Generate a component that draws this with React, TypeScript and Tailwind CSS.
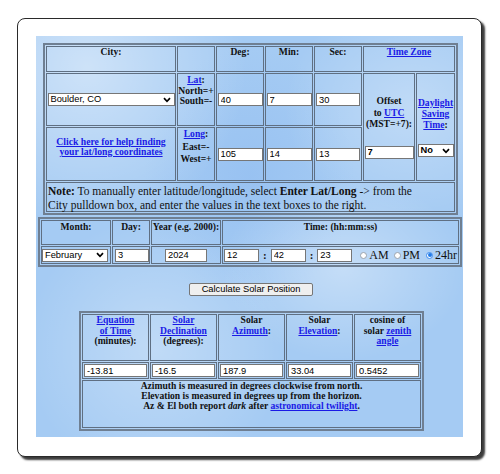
import React from "react";

const serif = "font-['Liberation_Serif','Times_New_Roman',serif]";
const sans = "font-['Liberation_Sans',Arial,sans-serif]";
const cell = "border border-[#5f6f82]";
const head = "text-center text-[9.6px] font-bold leading-[9px]";
const link = "text-[#1a1ae6] underline";

function TextBox({ value, className = "" }: { value: string; className?: string }) {
  return (
    <input
      readOnly
      defaultValue={value}
      className={`h-[13px] border border-[#767676] bg-white px-[2px] text-[9.3px] leading-[11px] text-black outline-none ${sans} ${className}`}
    />
  );
}

function Select({ value, className = "" }: { value: string; className?: string }) {
  return (
    <div
      className={`flex h-[13px] items-center justify-between border border-[#767676] bg-white pl-[2px] pr-[3px] text-[9.3px] leading-[11px] text-black ${sans} ${className}`}
    >
      <span>{value}</span>
      <svg width="8" height="6" viewBox="0 0 8 6">
        <path d="M1 1.2 4 4.3 7 1.2" fill="none" stroke="#000" strokeWidth="1.7" />
      </svg>
    </div>
  );
}

function Radio({ label, checked = false, className = "" }: { label: string; checked?: boolean; className?: string }) {
  return (
    <label className={`flex items-center ${className}`}>
      {checked ? (
        <span className="flex h-[7px] w-[7px] items-center justify-center rounded-full border border-[#3b8cf0] bg-white">
          <span className="h-[4px] w-[4px] rounded-full bg-[#1f7ae8]" />
        </span>
      ) : (
        <span className="h-[7px] w-[7px] rounded-full border border-[#9aa3ad] bg-white" />
      )}
      <span className="ml-[2px] text-[12px] leading-[12px]">{label}</span>
    </label>
  );
}

export default function App() {
  return (
    <div className={`min-h-screen bg-white pl-[17px] pt-[18px] text-[#111] ${serif}`}>
      <div className="w-[465px] rounded-[8px] border border-[#2a2a2a] bg-white pb-[19px] pl-[18px] pr-[18px] pt-[17px] shadow-[3px_3px_2px_#3c3c3c]">
        <div className="flex h-[401px] w-[427px] flex-col items-start bg-[#a5cbf3] bg-[radial-gradient(ellipse_at_12%_8%,rgba(255,255,255,0.45),transparent_30%),radial-gradient(ellipse_at_72%_58%,rgba(255,255,255,0.35),transparent_28%),radial-gradient(ellipse_at_28%_78%,rgba(255,255,255,0.3),transparent_30%),radial-gradient(ellipse_at_88%_18%,rgba(255,255,255,0.3),transparent_24%),radial-gradient(ellipse_at_50%_35%,rgba(140,185,240,0.5),transparent_35%)]">
          {/* location table */}
          <div className="ml-[7px] mt-[7px] grid w-[415px] grid-cols-[130px_38px_48px_48px_48px_52px_39px] grid-rows-[26px_53px_54px_30px] gap-px border-2 border-[#6f7f92] p-px">
            <div className={`${cell} ${head}`}>City:</div>
            <div className={cell} />
            <div className={`${cell} ${head}`}>Deg:</div>
            <div className={`${cell} ${head}`}>Min:</div>
            <div className={`${cell} ${head}`}>Sec:</div>
            <div className={`${cell} ${head} col-span-2`}>
              <a className={link}>Time Zone</a>
            </div>

            <div className={`${cell} flex items-center justify-center`}>
              <Select value="Boulder, CO" className="w-[127px]" />
            </div>
            <div className={`${cell} pt-px text-center text-[9.6px] font-bold leading-[10.5px]`}>
              <a className={link}>Lat</a>:<br />
              North=+
              <br />
              South=-
            </div>
            <div className={`${cell} flex items-center justify-center`}>
              <TextBox value="40" className="w-[45px]" />
            </div>
            <div className={`${cell} flex items-center justify-center`}>
              <TextBox value="7" className="w-[45px]" />
            </div>
            <div className={`${cell} flex items-center justify-center`}>
              <TextBox value="30" className="w-[44px]" />
            </div>
            <div className={`${cell} row-span-2 flex flex-col items-center justify-center text-center text-[9.6px] font-bold leading-[11.5px]`}>
              <span>Offset</span>
              <span>
                to <a className={link}>UTC</a>
              </span>
              <span>(MST=+7):</span>
              <TextBox value="7" className="mt-[16px] w-[49px]" />
            </div>
            <div className={`${cell} row-span-2 flex flex-col items-center justify-center text-center text-[9.6px] font-bold leading-[11px]`}>
              <a className={link}>Daylight</a>
              <a className={link}>Saving</a>
              <span>
                <a className={link}>Time</a>:
              </span>
              <Select value="No" className="mt-[14px] w-[36px]" />
            </div>

            <div className={`${cell} pt-[9px] text-center text-[9.7px] font-bold leading-[10px]`}>
              <a className={link}>
                Click here for help finding
                <br />
                your lat/long coordinates
              </a>
            </div>
            <div className={`${cell} text-center text-[9.6px] font-bold leading-[12.5px]`}>
              <a className={link}>Long</a>:<br />
              East=-
              <br />
              West=+
            </div>
            <div className={`${cell} flex items-center justify-center`}>
              <TextBox value="105" className="w-[45px]" />
            </div>
            <div className={`${cell} flex items-center justify-center`}>
              <TextBox value="14" className="w-[45px]" />
            </div>
            <div className={`${cell} flex items-center justify-center`}>
              <TextBox value="13" className="w-[44px]" />
            </div>

            <div className={`${cell} col-span-7 pl-px pt-px text-[11.5px] leading-[14px]`}>
              <b>Note:</b> To manually enter latitude/longitude, select <b>Enter Lat/Long</b> -&gt; from the
              <br />
              City pulldown box, and enter the values in the text boxes to the right.
            </div>
          </div>

          {/* date and time table */}
          <div className="ml-[2px] mt-[2px] grid w-[424px] grid-cols-[70px_38px_70px_237px] grid-rows-[25px_18px] gap-px border-2 border-[#6f7f92] p-px">
            <div className={`${cell} ${head} pt-px`}>Month:</div>
            <div className={`${cell} ${head} pt-px`}>Day:</div>
            <div className={`${cell} ${head} pt-px`}>Year (e.g. 2000):</div>
            <div className={`${cell} ${head} pt-px`}>Time: (hh:mm:ss)</div>

            <div className={`${cell} flex items-center`}>
              <Select value="February" className="w-[66px]" />
            </div>
            <div className={`${cell} flex items-center pl-[2px]`}>
              <TextBox value="3" className="w-[34px]" />
            </div>
            <div className={`${cell} flex items-center justify-center`}>
              <TextBox value="2024" className="w-[42px]" />
            </div>
            <div className={`${cell} flex items-center whitespace-nowrap pl-px`}>
              <TextBox value="12" className="w-[35px]" />
              <span className="px-[4px] text-[11px] font-bold leading-[11px]">:</span>
              <TextBox value="42" className="w-[35px]" />
              <span className="px-[4px] text-[11px] font-bold leading-[11px]">:</span>
              <TextBox value="23" className="w-[35px]" />
              <Radio label="AM" className="ml-[8px]" />
              <Radio label="PM" className="ml-[5px]" />
              <Radio label="24hr" checked className="ml-[6px]" />
            </div>
          </div>

          <button
            type="button"
            className={`ml-[153px] mt-[16px] h-[13px] w-[124px] rounded-[2px] border border-[#767676] bg-[#efefef] text-[9.3px] leading-[11px] text-black ${sans}`}
          >
            Calculate Solar Position
          </button>

          {/* results table */}
          <div className="ml-[43px] mt-[15px] grid w-[345px] grid-cols-[67px_67px_67px_67px_67px] grid-rows-[47px_17px_48px] gap-px border-2 border-[#6f7f92] p-px">
            <div className={`${cell} text-center text-[9.6px] font-bold leading-[10.5px]`}>
              <a className={link}>
                Equation
                <br />
                of Time
              </a>
              <br />
              (minutes):
            </div>
            <div className={`${cell} text-center text-[9.6px] font-bold leading-[10.5px]`}>
              <a className={link}>
                Solar
                <br />
                Declination
              </a>
              <br />
              (degrees):
            </div>
            <div className={`${cell} text-center text-[9.6px] font-bold leading-[10.5px]`}>
              Solar
              <br />
              <a className={link}>Azimuth</a>:
            </div>
            <div className={`${cell} text-center text-[9.6px] font-bold leading-[10.5px]`}>
              Solar
              <br />
              <a className={link}>Elevation</a>:
            </div>
            <div className={`${cell} text-center text-[9.6px] font-bold leading-[10.5px]`}>
              cosine of
              <br />
              solar <a className={link}>zenith</a>
              <br />
              <a className={link}>angle</a>
            </div>

            {["-13.81", "-16.5", "187.9", "33.04", "0.5452"].map((v) => (
              <div key={v} className={`${cell} flex items-center justify-center`}>
                <TextBox value={v} className="w-[63px]" />
              </div>
            ))}

            <div className={`${cell} col-span-5 text-center text-[9.6px] font-bold leading-[10px]`}>
              Azimuth is measured in degrees clockwise from north.
              <br />
              Elevation is measured in degrees up from the horizon.
              <br />
              Az &amp; El both report <i>dark</i> after <a className={link}>astronomical twilight</a>.
            </div>
          </div>
        </div>
      </div>
    </div>
  );
}
